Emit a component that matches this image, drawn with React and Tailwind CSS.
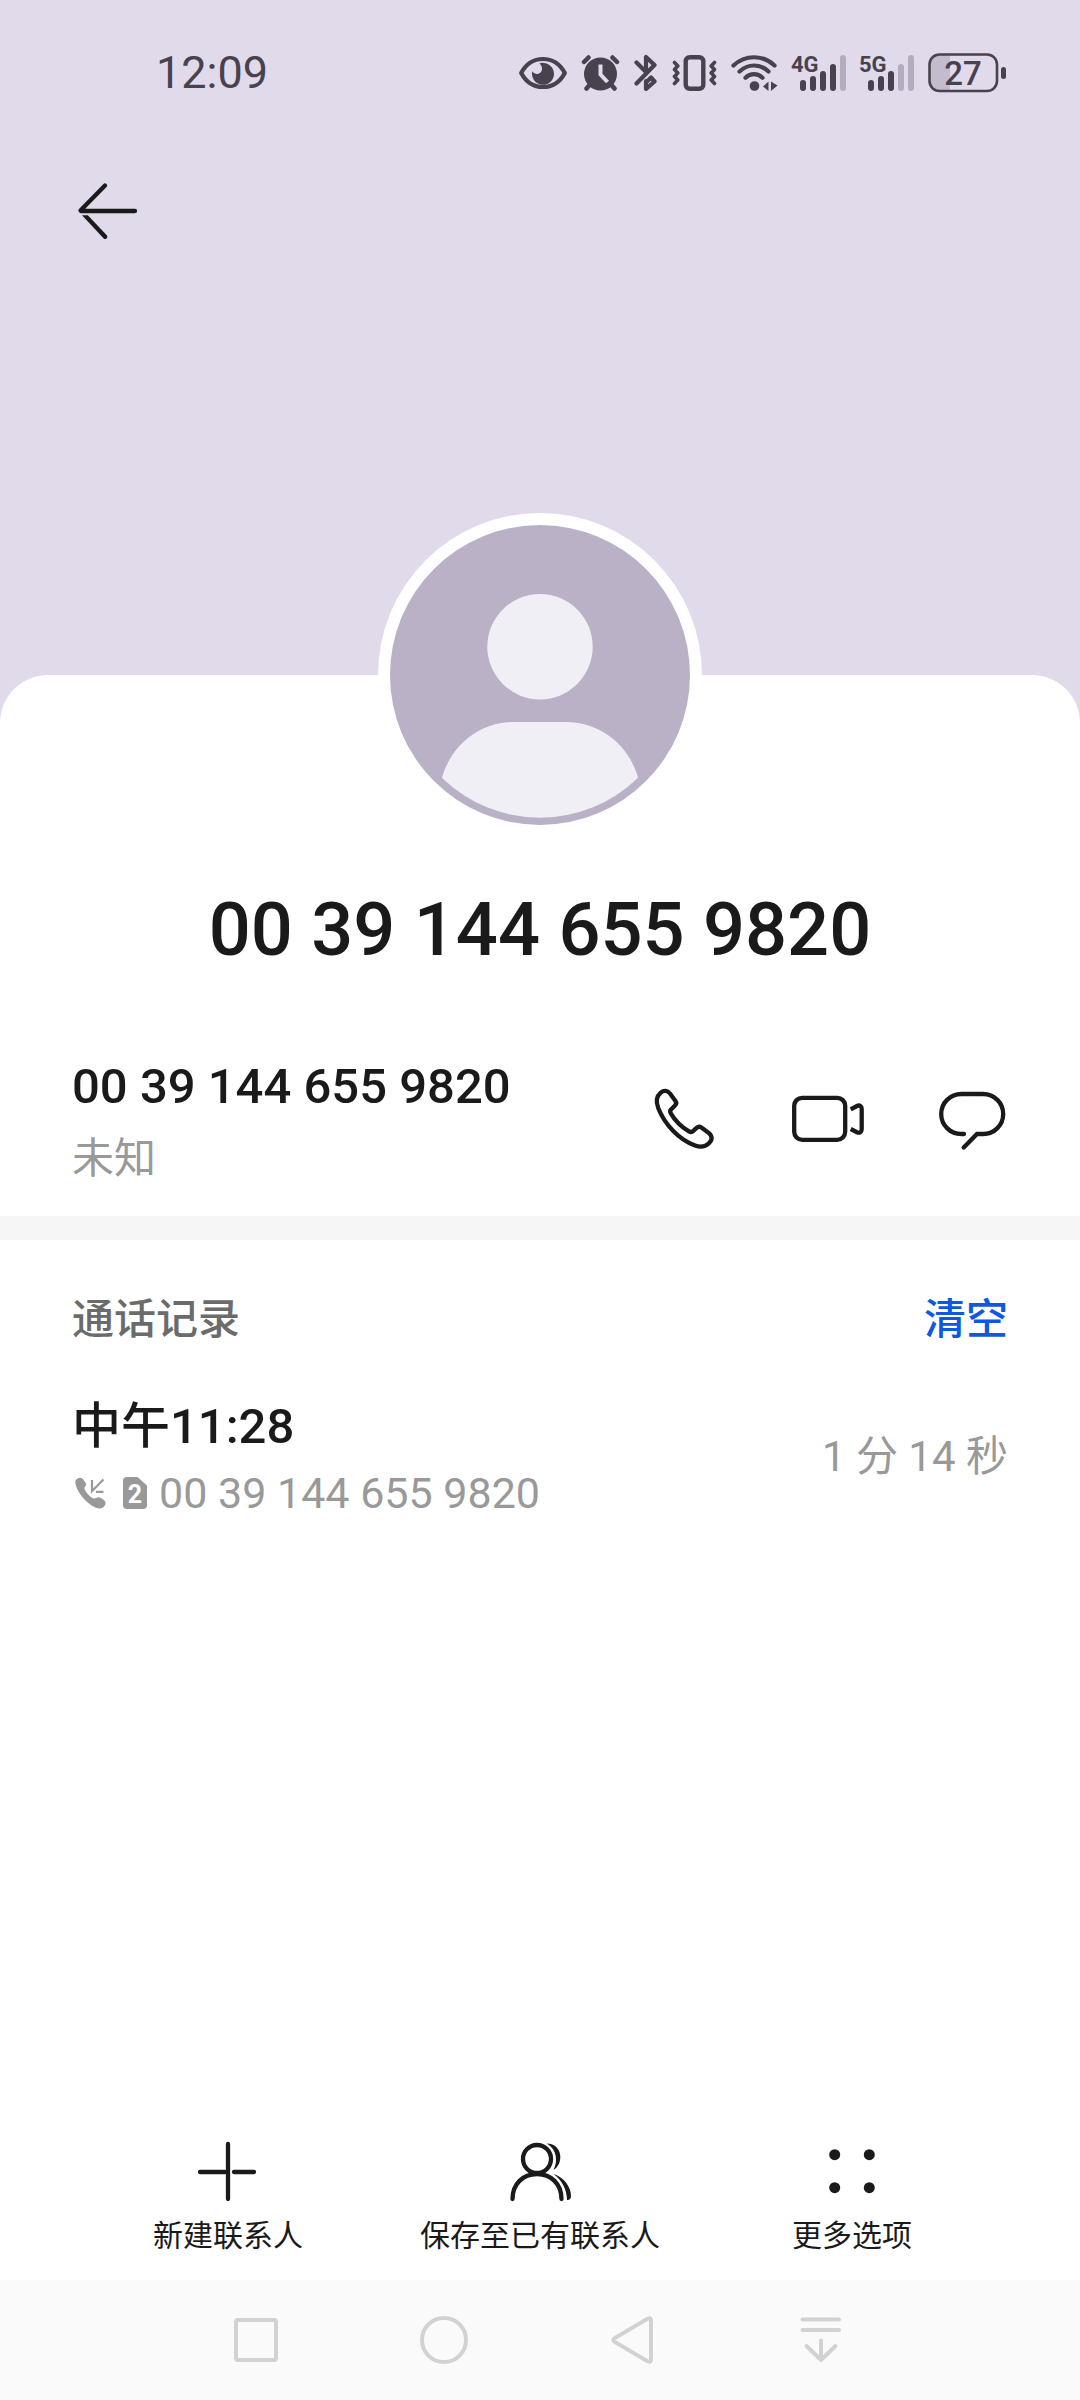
const PHONE_NUMBER = '00 39 144 655 9820'

const callLog = [
  { id: 1, time: '中午11:28', sim: '2', number: PHONE_NUMBER, duration: '1 分 14 秒' },
]

function SignalIcon({ label, level }) {
  const bars = [
    { x: 8, y: 25 },
    { x: 18, y: 21 },
    { x: 28, y: 16 },
    { x: 38, y: 9 },
    { x: 48, y: 0 },
  ]

  return (
    <svg width="54" height="36" viewBox="0 0 54 36" fill="currentColor" className="overflow-visible">
      <text x="-1" y="17" className="text-[22px] font-bold">{label}</text>
      {bars.map((bar, index) => (
        <rect
          key={bar.x}
          x={bar.x}
          y={bar.y}
          width="6"
          height={36 - bar.y}
          rx="3"
          fill={index < level ? '#47424d' : '#b3acbf'}
        />
      ))}
    </svg>
  )
}

function StatusBar() {
  return (
    <div className="flex h-[146px] items-center justify-between pr-[72px] pl-[156px] text-[#47424d]">
      <span className="text-[45px] leading-[60px]">12:09</span>

      <div className="flex items-center gap-[14px]">
        {/* Eye comfort */}
        <svg width="48" height="36" viewBox="0 0 48 36" fill="none">
          <path d="M2.200 18C7 9 15 4 24 4s17 5 21.800 14C41 27 33 32 24 32S7 27 2.200 18Z" stroke="currentColor" strokeWidth="4.200" strokeLinejoin="round" />
          <path d="M20.300 8.500A11 11 0 1 1 13.300 16.300C15.500 19.500 19 19.800 21.500 17.500C24 15 23.500 11 20.300 8.500Z" fill="currentColor" />
        </svg>

        {/* Alarm */}
        <svg width="39" height="36" viewBox="0 0 39 36" fill="none">
          <circle cx="19.500" cy="19" r="16.500" fill="currentColor" />
          <path d="M3 7 7.500 2.500M31.500 2.500 36 7M9 29.500 5.500 33.500M30 29.500 33.500 33.500" stroke="currentColor" strokeWidth="4.500" strokeLinecap="round" />
          <path d="M19.500 9.500v10l7 7.500" stroke="#e1daeb" strokeWidth="4" />
        </svg>

        {/* Bluetooth */}
        <svg width="24" height="38" viewBox="0 0 24 38" fill="none" stroke="currentColor" strokeWidth="4.200" strokeLinecap="round" strokeLinejoin="round">
          <path d="M2.500 8.500 12 18M2.500 29.500 20.500 11 12 3V16M12 27V35L20.500 27.500 17 23.500 12 28.500" />
        </svg>

        {/* Vibrate */}
        <svg width="45" height="36" viewBox="0 0 45 36" fill="none" stroke="currentColor" strokeWidth="4.400" strokeLinecap="round" strokeLinejoin="round">
          <rect x="13.700" y="2.200" width="17.600" height="31.600" rx="4" />
          <path d="M2.500 7.500 5.800 11 2.500 14.500 5.800 18 2.500 21.500 5.800 25 2.500 28.500M42.500 7.500 39.200 11 42.500 14.500 39.200 18 42.500 21.500 39.200 25 42.500 28.500" strokeWidth="3.600" />
        </svg>

        {/* Wi-Fi */}
        <svg width="47" height="36" viewBox="0 0 47 36" fill="none" stroke="currentColor" strokeWidth="4.200" strokeLinecap="round">
          <path d="M2.500 10.500C14-.500 32-.500 43.500 10.500M8.500 16.500C17 8.500 29 8.500 37.500 16.500M14.500 22.800C19.500 18 26.500 18 31.500 22.800" />
          <circle cx="23.500" cy="31" r="4.800" fill="currentColor" stroke="none" />
          <path d="M32 31.500 37.500 26.500V36ZM46.500 30.500 40 26.500V36Z" fill="currentColor" stroke="none" />
        </svg>

        <SignalIcon label="4G" level={4} />
        <SignalIcon label="5G" level={3} />

        {/* Battery */}
        <svg width="80" height="40" viewBox="0 0 80 40" fill="none">
          <path d="M12 2H22V38H12A10 10 0 0 1 2 28V12A10 10 0 0 1 12 2Z" fill="#c3bccf" />
          <rect x="1.500" y="1.500" width="67.500" height="36.500" rx="10" stroke="currentColor" strokeWidth="2.600" />
          <rect x="73" y="14" width="5" height="12" rx="2.500" fill="currentColor" />
          <text x="35" y="32" textAnchor="middle" fill="currentColor" className="text-[33px] font-medium">27</text>
        </svg>
      </div>
    </div>
  )
}

function Avatar() {
  return (
    <div className="rounded-full bg-white p-3">
      <svg width="300" height="300" viewBox="0 0 300 300">
        <circle cx="150" cy="150" r="150" fill="#bab1c7" />
        <circle cx="150" cy="121.700" r="52.700" fill="#f0eff5" />
        <path d="M124 197H176C210 197 239 220 248 252.700A140 140 0 0 1 52 252.700C61 220 90 197 124 197Z" fill="#f0eff5" />
      </svg>
    </div>
  )
}

function ContactActions() {
  return (
    <div className="flex gap-[72px]">
      <button type="button" aria-label="语音通话">
        <svg width="72" height="72" viewBox="0 0 72 72" fill="none" stroke="currentColor" strokeWidth="4.300" strokeLinejoin="round">
          <path d="M22 10.500 27.300 17.700C28.600 19.400 28.400 21.200 27 22.600L23.300 26.200C22 27.400 22 29 22.800 30.300C27 37.500 33.500 43.800 40.600 48.200C42.300 49.300 44 49.200 45.300 47.900L48.600 44.900C50 43.700 51.800 43.500 53.400 44.600L60.500 49.800C64.500 52.800 64.600 57 61 60.200C57.500 63.600 52.500 64.500 47 62.500C30.500 56.500 16.500 41 10.200 25C7.800 18.500 8.300 13.500 12.500 9.800C15.800 7 19.500 7.300 22 10.500Z" />
        </svg>
      </button>
      <button type="button" aria-label="视频通话">
        <svg width="72" height="72" viewBox="0 0 72 72" fill="none" stroke="currentColor" strokeWidth="4.300">
          <rect x="2.200" y="14.800" width="51" height="42" rx="8" />
          <path d="M58.700 26.300 65 23C67.500 21.700 69.700 23 69.700 25.700V46.300C69.700 49.200 67.500 50.400 65 49.200L58.700 46" />
        </svg>
      </button>
      <button type="button" aria-label="发送信息">
        <svg width="72" height="72" viewBox="0 0 72 72" fill="none" stroke="currentColor" strokeWidth="4.300" strokeLinecap="round">
          <path d="M28 51H25.500C14 51 5.200 42 5.200 31S14 11 25.500 11H47C58.500 11 67.200 20 67.200 31S58.500 51 47 51H41L27.700 64.500" />
        </svg>
      </button>
    </div>
  )
}

function CallLogItem({ call }) {
  return (
    <li className="flex items-center justify-between">
      <div>
        <p className="text-[49px] leading-[72px] font-medium">{call.time}</p>
        <div className="flex items-center text-[#999999]">
          {/* Incoming call */}
          <svg width="36" height="36" viewBox="0 0 36 36" fill="none">
            <path d="M5.500 3.500C8 2 10.500 3 12 5.500L14 8.500C14.500 10 13.500 11 12.500 12.500C11.500 14.500 18 22.500 21.500 23.500C23.500 24 24.500 22 26.500 22.300C29 22.800 33.500 25.500 33.600 28C33.700 31 30 34 27 33.500C17.500 32 5.500 18.500 3.500 9C3 6.500 3.500 4.700 5.500 3.500Z" fill="currentColor" />
            <path d="M20 5V16L31.500 4.500M24 16.800H31.500" stroke="currentColor" strokeWidth="2.200" />
          </svg>
          {/* SIM slot */}
          <svg width="24" height="32" viewBox="0 0 24 32" className="mr-3 ml-[15px]">
            <path d="M4 0H14.500L24 8.500V28A4 4 0 0 1 20 32H4A4 4 0 0 1 0 28V4A4 4 0 0 1 4 0Z" fill="currentColor" />
            <text x="12" y="26" textAnchor="middle" fill="#ffffff" className="text-[25px] font-bold">{call.sim}</text>
          </svg>
          <span className="text-[43px] leading-[60px]">{call.number}</span>
        </div>
      </div>
      <span className="text-[42px] leading-[60px] text-[#999999]">{call.duration}</span>
    </li>
  )
}

function FooterButton({ label, children }) {
  return (
    <button type="button" className="flex flex-1 flex-col items-center gap-2">
      <svg width="72" height="72" viewBox="0 0 72 72" fill="none" stroke="currentColor" strokeWidth="4.300" strokeLinecap="round">
        {children}
      </svg>
      <span className="text-[30px] leading-[40px] whitespace-nowrap">{label}</span>
    </button>
  )
}

function NavButton({ label, children }) {
  return (
    <button type="button" aria-label={label} className="flex flex-1 items-center justify-center">
      <svg width="48" height="48" viewBox="0 0 48 48" fill="none" stroke="#d2d2d2" strokeWidth="4" strokeLinecap="round" strokeLinejoin="round">
        {children}
      </svg>
    </button>
  )
}

export default function App() {
  return (
    <div className="flex min-h-screen flex-col bg-[#e1daeb] font-[Roboto,'Noto_Sans_CJK_SC',sans-serif] text-[#1a1a1a]">
      {/* Header */}
      <header className="pb-[399px]">
        <StatusBar />
        <div className="flex h-[130px] items-center px-[72px]">
          <button type="button" aria-label="返回">
            <svg width="72" height="72" viewBox="0 0 72 72" fill="none" stroke="currentColor" strokeWidth="4.300" strokeLinecap="round" strokeLinejoin="round">
              <path d="M33 10.500 8.500 35.500 9 36H63" />
              <path d="M10 40.300H15.800L34.800 60.300A2.100 2.100 0 0 1 31.500 63.200Z" fill="currentColor" stroke="none" />
            </svg>
          </button>
        </div>
      </header>

      {/* Contact card */}
      <main className="flex-1 rounded-t-[48px] bg-white">
        <section className="-mt-[162px] flex flex-col items-center">
          <Avatar />
          <h1 className="mt-[45px] text-[74px] leading-[96px] font-medium">{PHONE_NUMBER}</h1>
        </section>

        <section className="flex items-center justify-between px-[72px] pt-[73px] pb-[29px]">
          <div>
            <p className="text-[49px] leading-[72px] font-medium">{PHONE_NUMBER}</p>
            <p className="mt-2 text-[42px] leading-[56px] text-[#999999]">未知</p>
          </div>
          <ContactActions />
        </section>

        <div className="h-6 bg-[#f6f6f6]" />

        {/* Call history */}
        <section className="px-[72px] pt-[50px]">
          <div className="flex justify-between text-[42px] leading-[60px] font-medium">
            <h2 className="text-[#6b6b6b]">通话记录</h2>
            <button type="button" className="text-[#0f59e0]">清空</button>
          </div>
          <ul className="mt-[41px]">
            {callLog.map((call) => (
              <CallLogItem key={call.id} call={call} />
            ))}
          </ul>
        </section>
      </main>

      <footer className="flex bg-white px-[72px] pb-6">
        <FooterButton label="新建联系人">
          <path d="M36 8V63M8 36H33M42 36H62" />
        </FooterButton>
        <FooterButton label="保存至已有联系人">
          <circle cx="33" cy="23" r="14" />
          <path d="M8.500 63C8.500 48 19 38 33 38S57.500 48 57.500 63" />
          <path d="M43 7.500C59 8 60 28 49.500 34C54 25 53 14 43 7.500ZM49.500 38C60 41 67 51 67 60C67 63 65 64.500 63 64C63 54 58 44 49.500 38Z" fill="currentColor" stroke="none" />
        </FooterButton>
        <FooterButton label="更多选项">
          <g fill="currentColor" stroke="none">
            <circle cx="18.700" cy="18.700" r="5.500" />
            <circle cx="53.300" cy="18.700" r="5.500" />
            <circle cx="18.700" cy="51.700" r="5.500" />
            <circle cx="53.300" cy="51.700" r="5.500" />
          </g>
        </FooterButton>
      </footer>

      {/* System navigation */}
      <nav className="flex h-[120px] bg-[#fafafa] pr-[166px] pl-[162px]">
        <NavButton label="最近任务">
          <rect x="4" y="4" width="40" height="40" rx="2" />
        </NavButton>
        <NavButton label="主屏幕">
          <circle cx="24" cy="24" r="22" />
        </NavButton>
        <NavButton label="返回">
          <path d="M6.500 22.300 39.500 2.800Q43 1 43 4.500V43.500Q43 47 39.500 45.200L6.500 25.700Q4 24 6.500 22.300Z" />
        </NavButton>
        <NavButton label="下拉通知栏">
          <path d="M6.500 3.500H43M6.500 14H43M25 24.500V44M10.500 30 25 44 39.500 30" />
        </NavButton>
      </nav>
    </div>
  )
}
